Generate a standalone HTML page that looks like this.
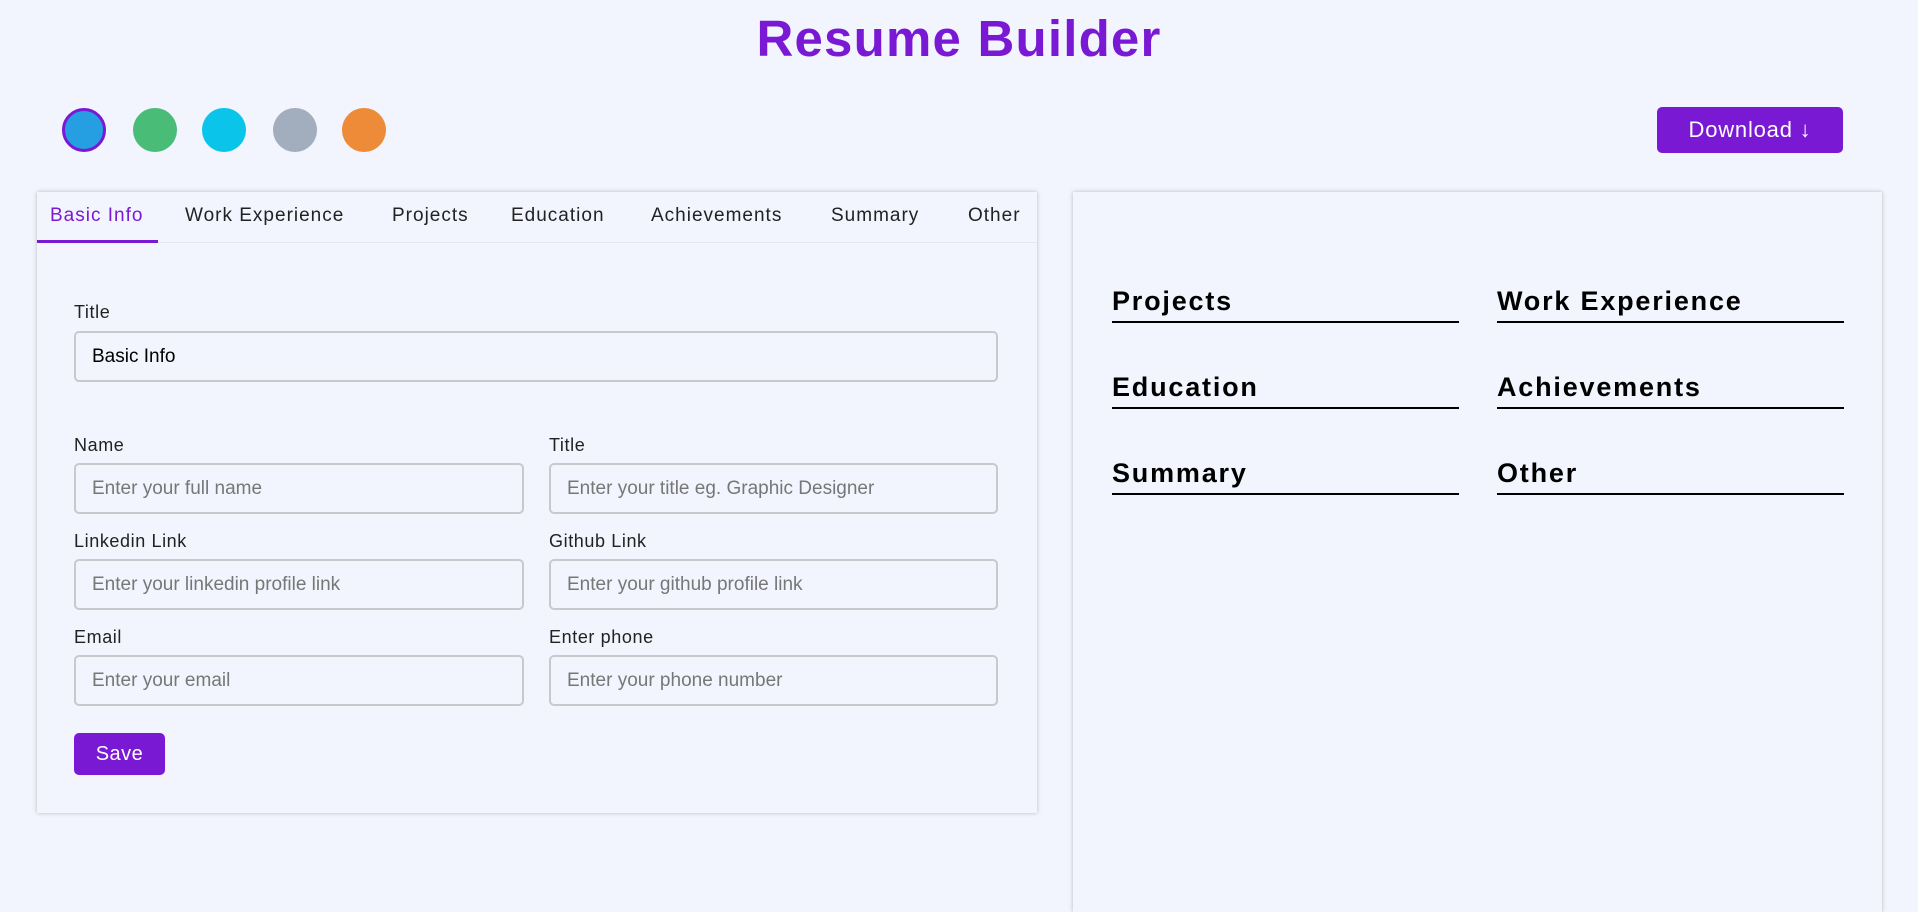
<!DOCTYPE html>
<html><head><meta charset="utf-8"><style>
*{box-sizing:border-box;margin:0;padding:0}
body{width:1918px;height:891px;background:#f2f5fd;font-family:"Liberation Sans",sans-serif;position:relative;overflow:hidden;color:#111}
.abs{position:absolute}
h1{position:absolute;left:0;width:1918px;top:9px;text-align:center;font-size:51px;font-weight:bold;color:#7a19d4;letter-spacing:1.2px}
.dot{position:absolute;top:108px;width:44px;height:44px;border-radius:50%}
.btn{position:absolute;background:#7a19d4;color:#fff;border-radius:5px;display:flex;align-items:center;justify-content:center}
.panel{position:absolute;background:#f2f5fd;box-shadow:0 0 4px rgba(0,0,0,0.25)}
.tab{position:absolute;top:205px;font-size:19px;color:#222;letter-spacing:1px}
.lbl{position:absolute;font-size:18px;color:#222;letter-spacing:0.6px}
.inp{position:absolute;height:51px;border:2px solid #c8c9cc;border-radius:5px;background:#f2f5fd;font-size:19px;color:#777;padding-left:16px;display:flex;align-items:center}
.hd{position:absolute;font-size:27px;font-weight:bold;color:#000;border-bottom:2.5px solid #000;height:37px;width:347px;letter-spacing:1.8px}
</style></head><body>
<h1>Resume Builder</h1>
<div class="dot" style="left:62px;background:#259fe1;border:3px solid #7a19d4"></div>
<div class="dot" style="left:133px;background:#49bc77"></div>
<div class="dot" style="left:202px;background:#0ac4e9"></div>
<div class="dot" style="left:273px;background:#a2aebd"></div>
<div class="dot" style="left:342px;background:#ee8b38"></div>
<div class="btn" style="left:1657px;top:107px;width:186px;height:46px;font-size:22px;letter-spacing:0.8px">Download ↓</div>

<div class="panel" style="left:37px;top:192px;width:1000px;height:621px"></div>
<div class="abs" style="left:37px;top:192px;width:1000px;height:51px;border-bottom:1px solid #e3e6ee"></div>
<div class="abs" style="left:37px;top:240px;width:121px;height:3px;background:#7a19d4"></div>
<div class="tab" style="left:50px;color:#7a19d4">Basic Info</div>
<div class="tab" style="left:185px">Work Experience</div>
<div class="tab" style="left:392px">Projects</div>
<div class="tab" style="left:511px">Education</div>
<div class="tab" style="left:651px">Achievements</div>
<div class="tab" style="left:831px">Summary</div>
<div class="tab" style="left:968px">Other</div>

<div class="lbl" style="left:74px;top:302px">Title</div>
<div class="inp" style="left:74px;top:331px;width:924px;color:#000">Basic Info</div>
<div class="lbl" style="left:74px;top:435px">Name</div>
<div class="lbl" style="left:549px;top:435px">Title</div>
<div class="inp" style="left:74px;top:463px;width:450px">Enter your full name</div>
<div class="inp" style="left:549px;top:463px;width:449px">Enter your title eg. Graphic Designer</div>
<div class="lbl" style="left:74px;top:531px">Linkedin Link</div>
<div class="lbl" style="left:549px;top:531px">Github Link</div>
<div class="inp" style="left:74px;top:559px;width:450px">Enter your linkedin profile link</div>
<div class="inp" style="left:549px;top:559px;width:449px">Enter your github profile link</div>
<div class="lbl" style="left:74px;top:627px">Email</div>
<div class="lbl" style="left:549px;top:627px">Enter phone</div>
<div class="inp" style="left:74px;top:655px;width:450px">Enter your email</div>
<div class="inp" style="left:549px;top:655px;width:449px">Enter your phone number</div>
<div class="btn" style="left:74px;top:733px;width:91px;height:42px;font-size:20px;letter-spacing:0.5px">Save</div>

<div class="panel" style="left:1073px;top:192px;width:809px;height:720px"></div>
<div class="hd" style="left:1112px;top:286px">Projects</div>
<div class="hd" style="left:1497px;top:286px">Work Experience</div>
<div class="hd" style="left:1112px;top:372px">Education</div>
<div class="hd" style="left:1497px;top:372px">Achievements</div>
<div class="hd" style="left:1112px;top:458px">Summary</div>
<div class="hd" style="left:1497px;top:458px">Other</div>
</body></html>
